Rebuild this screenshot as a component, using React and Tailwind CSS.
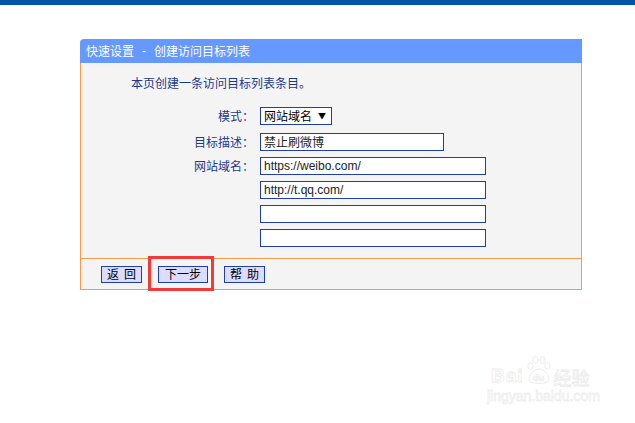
import React from "react";

const cjk = { fontFamily: '"Noto Sans CJK SC", "Liberation Sans", sans-serif' };
const latin = { fontFamily: '"Liberation Sans", Arial, sans-serif' };

function Field({ value, w }) {
  return (
    <div
      className={`h-[18px] ${w} border border-[#1f3fa6] bg-white pl-[3px] flex items-center text-[12px] text-[#222] leading-none whitespace-nowrap`}
      style={value && /[a-z]/.test(value) ? latin : cjk}
    >
      {value}
    </div>
  );
}

function Row({ label, children, className = "" }) {
  return (
    <div className={`flex items-center ${className}`}>
      <div className="w-[173px] text-right text-[12px] text-[#1a3a8c] leading-none whitespace-nowrap">{label}</div>
      <div className="ml-[6px]">{children}</div>
    </div>
  );
}

function Btn({ children, w, spaced = true }) {
  return (
    <div
      className={`h-[17px] ${w} border border-[#1f3fa6] bg-[#dcdcff] flex items-center justify-center text-[12px] text-black leading-none whitespace-nowrap ${spaced ? "tracking-[5px] pl-[5px]" : ""}`}
    >
      {children}
    </div>
  );
}

export default function App() {
  return (
    <div className="w-[635px] h-[423px] bg-white relative overflow-hidden" style={cjk}>
      <div className="h-[5px] bg-[#0054a6]" />
      <div className="ml-[80px] mt-[34px] w-[502px]">
        <div className="h-[24px] bg-[#6699ff] rounded-tl-[4px] flex items-center pl-[6px] text-white text-[12px] leading-none whitespace-nowrap">
          <span>快速设置</span>
          <span className="mx-[8px]" style={latin}>-</span>
          <span>创建访问目标列表</span>
        </div>
        <div className="border-x border-[#f79a4a] bg-[#f4f4f4] pt-[14px] pb-[11px]">
          <div className="pl-[50px] text-[12px] text-[#1a3a8c] leading-[12px]">本页创建一条访问目标列表条目。</div>
          <div className="mt-[18px] flex flex-col gap-[6px]">
            <Row label="模式：" className="mb-[2px]">
              <div className="h-[18px] w-[72px] border border-[#1f3fa6] bg-white flex items-center pl-[3px] text-[12px] text-black leading-none whitespace-nowrap">
                网站域名
                <span className="ml-[6px] text-[8px]">▼</span>
              </div>
            </Row>
            <Row label="目标描述：">
              <Field value="禁止刷微博" w="w-[184px]" />
            </Row>
            <Row label="网站域名：">
              <Field value="https://weibo.com/" w="w-[226px]" />
            </Row>
            <Row label="">
              <Field value="http://t.qq.com/" w="w-[226px]" />
            </Row>
            <Row label="">
              <Field value="" w="w-[226px]" />
            </Row>
            <Row label="">
              <Field value="" w="w-[226px]" />
            </Row>
          </div>
        </div>
        <div className="relative border border-[#f79a4a] bg-[#f4f4f4] h-[32px] flex items-center pl-[20px] gap-[16px]">
          <Btn w="w-[41px]">返回</Btn>
          <Btn w="w-[50px]" spaced={false}>下一步</Btn>
          <Btn w="w-[41px]">帮助</Btn>
          <div className="absolute left-[67px] top-[-3px] w-[66px] h-[35px] border-[3px] border-[#f23a3a]" />
        </div>
      </div>

      {/* watermark */}
      <div className="absolute left-[491px] top-[355px] select-none">
        <div className="flex items-end">
          <span
            className="text-[19px] font-bold leading-none text-white [-webkit-text-stroke:0.8px_#ececec] tracking-[1px]"
            style={latin}
          >
            Bai
          </span>
          <svg width="28" height="30" viewBox="0 0 28 30" className="mx-[1px]">
            <g fill="#fff" stroke="#ececec" strokeWidth="1">
              <ellipse cx="5.5" cy="11" rx="2.6" ry="3.4" />
              <ellipse cx="10.5" cy="5" rx="2.6" ry="3.6" />
              <ellipse cx="17.5" cy="5" rx="2.6" ry="3.6" />
              <ellipse cx="22.5" cy="11" rx="2.6" ry="3.4" />
              <path d="M4 25 C4 18 10 14 14 14 C18 14 24 18 24 25 C24 29.5 4 29.5 4 25 Z" />
            </g>
            <text x="8" y="26" fontSize="9" fontWeight="bold" fill="#fff" stroke="#ececec" strokeWidth="0.7" fontFamily="Liberation Sans, sans-serif">du</text>
          </svg>
          <span className="text-[18px] leading-none text-white [-webkit-text-stroke:0.8px_#ececec] mb-[-1px]">经验</span>
        </div>
        <div
          className="mt-[4px] ml-[-4px] text-[14px] leading-none text-white [-webkit-text-stroke:0.8px_#eeeeee]"
          style={latin}
        >
          jingyan.baidu.com
        </div>
      </div>
    </div>
  );
}
